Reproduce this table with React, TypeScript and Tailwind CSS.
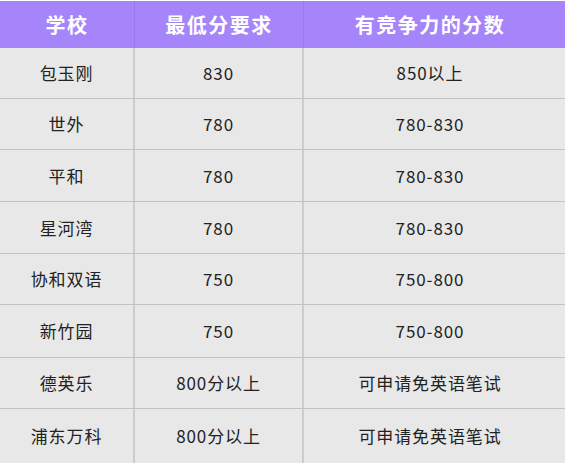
import React from "react";

const rows: { h: string; a: string; b: string; c: string }[] = [
  { h: "h-[50px]", a: "包玉刚", b: "830", c: "850以上" },
  { h: "h-[51px]", a: "世外", b: "780", c: "780-830" },
  { h: "h-[52px]", a: "平和", b: "780", c: "780-830" },
  { h: "h-[52px]", a: "星河湾", b: "780", c: "780-830" },
  { h: "h-[51px]", a: "协和双语", b: "750", c: "750-800" },
  { h: "h-[53px]", a: "新竹园", b: "750", c: "750-800" },
  { h: "h-[51px]", a: "德英乐", b: "800分以上", c: "可申请免英语笔试" },
  { h: "h-[55px]", a: "浦东万科", b: "800分以上", c: "可申请免英语笔试" },
];

export default function App() {
  return (
    <div
      className="w-[567px] h-[466px] bg-white pt-px"
      style={{ fontFamily: '"Noto Sans CJK SC", "Noto Sans", sans-serif' }}
    >
      <div className="w-[565px]">
        <div className="grid grid-cols-[135px_169px_261px] h-[47px] bg-[#a685fb] text-white font-bold text-[20px] tracking-[1.5px]">
          <div className="flex items-center justify-center border-r border-[#9a79ee]">学校</div>
          <div className="flex items-center justify-center border-r border-[#9a79ee]">最低分要求</div>
          <div className="flex items-center justify-center pr-[9px]">有竞争力的分数</div>
        </div>
        {rows.map((r, i) => (
          <div
            key={i}
            className={`grid grid-cols-[135px_169px_261px] ${r.h} bg-[#e8e8e8] text-[#222222] text-[17px] tracking-[0.9px] ${
              i > 0 ? "border-t border-[#c2c2c2]" : ""
            }`}
          >
            <div className="flex items-center justify-center border-r-2 border-[#cdcdcd]">{r.a}</div>
            <div className="flex items-center justify-center border-r-2 border-[#cdcdcd]">{r.b}</div>
            <div className="flex items-center justify-center pr-[9px]">{r.c}</div>
          </div>
        ))}
      </div>
    </div>
  );
}
